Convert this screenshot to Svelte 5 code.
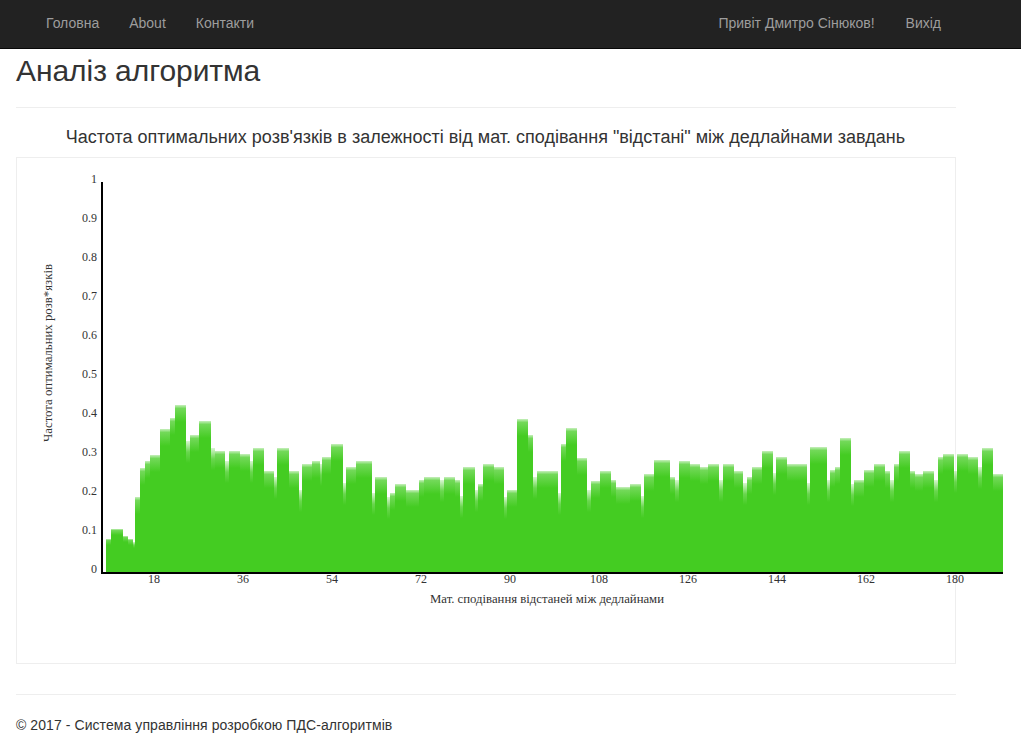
<script>
  // Histogram outline: [right edge, top edge]; each step begins where the previous ended.
  const steps = [
    [111,538.5],[122.7,529],[127.5,535.5],[132.7,538.5],[135,542],[140.3,496.5],[145.3,467.5],[150.3,461],[160,454.5],[170,428.5],
    [175,418],[186,405],[190,441],[199.3,434.5],[210.5,421],[215,447.5],[225,451],[229,460.5],[240,451],[249.7,454],
    [252.7,460.5],[264,447.5],[274,470.5],[277,477],[289,447.5],[299,470.5],[302,490],[312,463.5],[320,460.5],[322,464],
    [331.3,457],[342.7,444],[345.7,483],[356,467],[372,460.5],[375,493],[386.7,477],[390,497],[395,493],[406,483.5],
    [419,490],[424,480],[440.3,476.5],[444,480],[455,476.5],[460,480],[463,496],[474.7,467],[478,490],[483,483.5],
    [494.3,464],[504,467],[507,497],[517,490],[528.3,418.5],[533.3,434.5],[536.7,477],[557.5,470.5],[561,493],[565.7,444],
    [577,428],[587,457.5],[590.7,490],[600,480.5],[611,470.5],[616,480],[630,486.5],[641,483.5],[644,496],[654,473.5],
    [670,460],[675,477],[678.7,480],[689.7,460.5],[699.7,464],[708,467],[719,463.5],[722.7,480],[733.7,463.5],[743.3,470.5],
    [746.7,483],[752,477],[761.7,467],[773,450.5],[776,473],[787.3,457],[807,463.5],[810,483],[826.7,447],[830,480],
    [835,470],[840,467],[851,437.5],[854.3,483.5],[864.3,480],[874,470],[885,463.5],[890,470.5],[893.7,480],[898.7,463.5],
    [910,450.5],[914.7,470.5],[923,473.5],[934,470.5],[937.7,480],[942.7,457],[953.7,454],[957,470.5],[968,454],[978,457],
    [981.7,467],[992.7,447.5],[1003,473.5]
  ];
  const bars = steps.map(([right, top], i) => {
    const left = Math.round(i ? steps[i - 1][0] : 106);
    const r = Math.round(right);
    const y = Math.round(top);
    const narrow = r - left < 5;
    const low = 572 - y < 50;
    return { x: left, w: r - left, y, fade: low ? 6 : narrow ? 22 : 17, narrow };
  });
  const yLabels = ['1', '0.9', '0.8', '0.7', '0.6', '0.5', '0.4', '0.3', '0.2', '0.1', '0'];
  const xLabels = [18, 36, 54, 72, 90, 108, 126, 144, 162, 180];
</script>

<nav>
  <div class="links">
    <a href="#home">Головна</a>
    <a href="#about">About</a>
    <a href="#contacts">Контакти</a>
  </div>
  <div class="links account">
    <a href="#user">Привіт Дмитро Сінюков!</a>
    <a href="#exit">Вихід</a>
  </div>
</nav>
<main>
  <h2>Аналіз алгоритма</h2>
  <hr />
  <h4>Частота оптимальних розв'язків в залежності від мат. сподівання "відстані" між дедлайнами завдань</h4>
  <div class="frame">
    <svg width="938" height="505" viewBox="17 158 938 505">
      <defs>
        <linearGradient id="wide" x1="0" y1="0" x2="0" y2="1">
          <stop offset="0" stop-color="#44cc22" stop-opacity="0.3" />
          <stop offset="0.2" stop-color="#44cc22" stop-opacity="0.75" />
          <stop offset="1" stop-color="#44cc22" />
        </linearGradient>
        <linearGradient id="narrow" x1="0" y1="0" x2="0" y2="1">
          <stop offset="0" stop-color="#44cc22" stop-opacity="0.2" />
          <stop offset="0.5" stop-color="#44cc22" stop-opacity="0.8" />
          <stop offset="1" stop-color="#44cc22" />
        </linearGradient>
      </defs>
      <g shape-rendering="crispEdges">
        {#each bars as b}
          <rect x={b.x} y={b.y} width={b.w} height={b.fade} fill={b.narrow ? 'url(#narrow)' : 'url(#wide)'} />
          <rect x={b.x} y={b.y + b.fade} width={b.w} height={572 - b.y - b.fade} fill="#44cc22" />
        {/each}
        <rect x="101" y="182" width="2" height="392" />
        <rect x="101" y="572" width="902" height="2" />
      </g>
      {#each yLabels as label, i}
        <text x="97" y={183 + i * 39} text-anchor="end">{label}</text>
      {/each}
      {#each xLabels as label, i}
        <text x={154 + i * 89} y="583" text-anchor="middle">{label}</text>
      {/each}
      <text class="title" x="430" y="603" textLength="234" lengthAdjust="spacingAndGlyphs">Мат. сподівання відстаней між дедлайнами</text>
      <text class="title" transform="translate(52 442) rotate(-90)" textLength="178" lengthAdjust="spacingAndGlyphs">Частота оптимальних розв*язків</text>
    </svg>
  </div>
  <hr class="bottom" />
  <footer>© 2017 - Система управління розробкою ПДС-алгоритмів</footer>
</main>

<style>
  :global(body) { margin: 0; background: #fff; overflow: hidden; }
  nav, main { font-family: "Liberation Sans", Arial, sans-serif; font-size: 14px; line-height: 20px; box-sizing: border-box; }
  nav { height: 49px; background: #222; border-bottom: 1px solid #080808; padding: 13px 65px 0 31px; display: flex; justify-content: space-between; }
  .links { display: flex; }
  .account { gap: 1px; }
  a { color: #9d9d9d; text-decoration: none; padding: 0 15px; }
  main { width: 940px; margin-left: 16px; color: #333; }
  h2 { margin: 5px 0 0; font-size: 30px; line-height: 33px; font-weight: 400; letter-spacing: -0.06px; }
  hr { margin: 20px 0; border: 0; border-top: 1px solid #eee; }
  h4 { margin: 0 0 10px; font-size: 18px; line-height: 19px; font-weight: 400; text-align: center; white-space: nowrap; padding-right: 1px; }
  .frame { height: 505px; border: 1px solid #eee; }
  svg { display: block; overflow: visible; }
  svg text { font-family: "Liberation Serif", serif; font-size: 12px; fill: #333; }
  svg .title { font-size: 11.5px; }
  hr.bottom { margin: 30px 0 20px; }
  footer { letter-spacing: 0.075px; }
</style>
